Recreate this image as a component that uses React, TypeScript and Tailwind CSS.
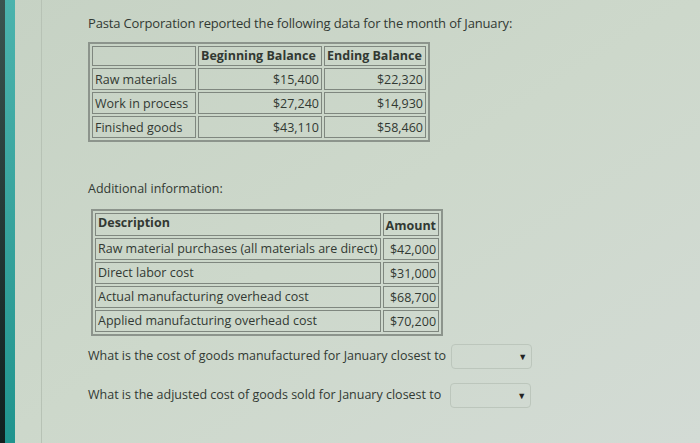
const rows1 = [
  ["Raw materials", "$15,400", "$22,320"],
  ["Work in process", "$27,240", "$14,930"],
  ["Finished goods", "$43,110", "$58,460"],
];

const rows2 = [
  ["Raw material purchases (all materials are direct)", "$42,000"],
  ["Direct labor cost", "$31,000"],
  ["Actual manufacturing overhead cost", "$68,700"],
  ["Applied manufacturing overhead cost", "$70,200"],
];

function Select() {
  return (
    <div className="flex h-[25px] w-[81px] items-center justify-end rounded-sm border border-[#bcc6bc] pr-[4px]">
      <span className="text-[9px] leading-none text-[#222]">▼</span>
    </div>
  );
}

export default function App() {
  return (
    <div
      className="flex h-[443px] w-[700px] overflow-hidden bg-gradient-to-br from-[#c6d2c4] via-[#cdd8cb] to-[#d3dbd5] text-[#323933]"
      style={{ fontFamily: '"Open Sans", "Liberation Sans", sans-serif' }}
    >
      <div className="w-[5px] bg-gradient-to-b from-[#3b5550] to-[#10201f]" />
      <div className="w-[10px] bg-gradient-to-b from-[#4bb3ad] to-[#1f948e]" />
      <div className="w-[27px] border-r border-[#b7c2b5]" />
      <div className="flex flex-col pl-[46px] pt-[14px]">
        <p className="text-[13px] leading-[18px] tracking-[-0.15px]">
          Pasta Corporation reported the following data for the month of January:
        </p>

        <table className="mt-[10px] w-[342px] border-separate border-spacing-[2px] border-2 border-[#8c948c] text-[12.5px] leading-[18px] whitespace-nowrap">
          <tbody>
            <tr>
              <td className="w-[104px] border border-[#7f877f]" />
              <td className="w-[124px] border border-[#7f877f] px-[2px] font-bold">Beginning Balance</td>
              <td className="border border-[#7f877f] px-[2px] font-bold">Ending Balance</td>
            </tr>
            {rows1.map((r) => (
              <tr key={r[0]}>
                <td className="h-[22px] border border-[#7f877f] px-[2px] pt-[2px]">{r[0]}</td>
                <td className="border border-[#7f877f] px-[2px] pt-[2px] text-right">{r[1]}</td>
                <td className="border border-[#7f877f] px-[2px] pt-[2px] text-right">{r[2]}</td>
              </tr>
            ))}
          </tbody>
        </table>

        <p className="mt-[38px] text-[12.5px] leading-[18px]">Additional information:</p>

        <table className="ml-[3px] mt-[11px] w-[346px] border-separate border-spacing-[2px] border-2 border-[#8c948c] text-[12.5px] leading-[18px]">
          <tbody>
            <tr>
              <td className="h-[21px] border border-[#7f877f] px-[2px] align-top font-bold">Description</td>
              <td className="w-[56px] border border-[#7f877f] px-[2px] pt-[3px] text-right font-bold">Amount</td>
            </tr>
            {rows2.map((r) => (
              <tr key={r[0]}>
                <td className="h-[21px] border border-[#7f877f] px-[2px] whitespace-nowrap">{r[0]}</td>
                <td className="border border-[#7f877f] px-[2px] pt-[2px] text-right">{r[1]}</td>
              </tr>
            ))}
          </tbody>
        </table>

        <div className="mt-[8px] flex items-center gap-[5px] text-[12.5px]">
          <span>What is the cost of goods manufactured for January closest to</span>
          <Select />
        </div>
        <div className="mt-[14px] flex items-center gap-[9px] text-[12.5px]">
          <span>What is the adjusted cost of goods sold for January closest to</span>
          <Select />
        </div>
      </div>
    </div>
  );
}
